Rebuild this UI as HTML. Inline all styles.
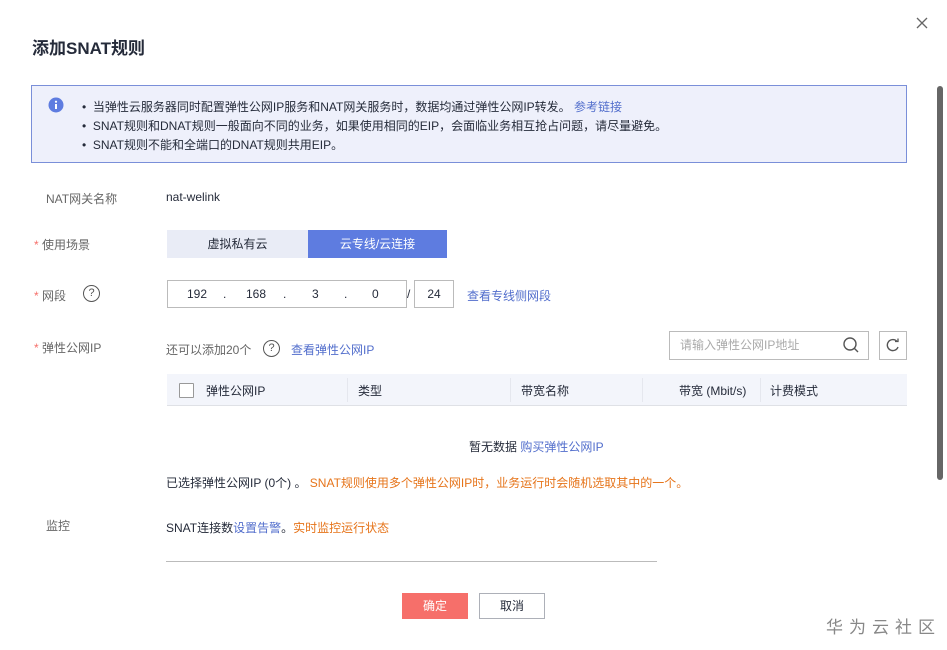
<!DOCTYPE html>
<html><head><meta charset="utf-8"><style>
*{box-sizing:border-box;margin:0;padding:0}
body{width:947px;height:650px;background:#fff;font-family:"Liberation Sans","Noto Sans CJK SC",sans-serif;font-size:12px;color:#252b3a;position:relative;overflow:hidden}
.a{position:absolute;white-space:nowrap}
.blue{color:#526ecc}.org{color:#e6741a}.gray{color:#666}.star{color:#f66f6a}
</style></head><body>
<div class="a" style="left:32px;top:34px;font-size:17px;font-weight:bold;color:#252b3a">添加SNAT规则</div>
<svg class="a" style="left:916px;top:17px" width="12" height="12"><path d="M1 1L11 11M11 1L1 11" stroke="#666" stroke-width="1.3"/></svg>
<div class="a" style="left:937px;top:86px;width:6px;height:394px;background:#666;border-radius:3px"></div>
<div class="a" style="left:31px;top:85px;width:876px;height:78px;background:#eef0fb;border:1px solid #7a8fd9"></div>
<svg class="a" style="left:48px;top:97px" width="16" height="16"><circle cx="8" cy="8" r="7.5" fill="#5e7ce0"/><rect x="7" y="7" width="2" height="5" fill="#fff"/><circle cx="8" cy="4.7" r="1.1" fill="#fff"/></svg>
<div class="a" style="left:82px;top:98px;line-height:19px">• &nbsp;当弹性云服务器同时配置弹性公网IP服务和NAT网关服务时，数据均通过弹性公网IP转发。 <span class="blue">参考链接</span><br>• &nbsp;SNAT规则和DNAT规则一般面向不同的业务，如果使用相同的EIP，会面临业务相互抢占问题，请尽量避免。<br>• &nbsp;SNAT规则不能和全端口的DNAT规则共用EIP。</div>
<div class="a gray" style="left:46px;top:190px">NAT网关名称</div>
<div class="a" style="left:166px;top:190px">nat-welink</div>
<div class="a gray" style="left:34px;top:236px"><span class="star">*</span> 使用场景</div>
<div class="a" style="left:167px;top:230px;width:141px;height:28px;background:#e9ecf6;text-align:center;line-height:28px">虚拟私有云</div>
<div class="a" style="left:308px;top:230px;width:139px;height:28px;background:#5e7ce0;color:#fff;text-align:center;line-height:28px">云专线/云连接</div>
<div class="a gray" style="left:34px;top:287px"><span class="star">*</span> 网段</div>
<div class="a" style="left:83px;top:285px;width:17px;height:17px;border:1.3px solid #555;border-radius:50%;text-align:center;line-height:15px;font-size:11px;color:#555">?</div>
<div class="a" style="left:167px;top:280px;width:240px;height:28px;border:1px solid #bbb"></div>
<div class="a" style="left:187px;top:287px">192</div><div class="a" style="left:223px;top:287px">.</div><div class="a" style="left:246px;top:287px">168</div><div class="a" style="left:283px;top:287px">.</div><div class="a" style="left:312px;top:287px">3</div><div class="a" style="left:344px;top:287px">.</div><div class="a" style="left:372px;top:287px">0</div>
<div class="a" style="left:407px;top:287px">/</div>
<div class="a" style="left:414px;top:280px;width:40px;height:28px;border:1px solid #bbb;text-align:center;line-height:26px">24</div>
<div class="a blue" style="left:467px;top:287px">查看专线侧网段</div>
<div class="a gray" style="left:34px;top:339px"><span class="star">*</span> 弹性公网IP</div>
<div class="a gray" style="left:166px;top:341px">还可以添加20个</div>
<div class="a" style="left:263px;top:340px;width:17px;height:17px;border:1.3px solid #555;border-radius:50%;text-align:center;line-height:15px;font-size:11px;color:#555">?</div>
<div class="a blue" style="left:291px;top:341px">查看弹性公网IP</div>
<div class="a" style="left:669px;top:331px;width:200px;height:29px;border:1px solid #bbb;color:#aaa;padding-left:10px;line-height:27px">请输入弹性公网IP地址</div>
<svg class="a" style="left:842px;top:336px" width="18" height="18"><circle cx="8" cy="8" r="6" fill="none" stroke="#555" stroke-width="1.4"/><path d="M12.5 12.5L16 16" stroke="#555" stroke-width="1.4"/></svg>
<div class="a" style="left:879px;top:331px;width:28px;height:29px;border:1px solid #bbb"></div>
<svg class="a" style="left:885px;top:337px" width="16" height="16"><path d="M12 4.5A5.5 5.5 0 1 0 13 10" fill="none" stroke="#555" stroke-width="1.4"/><path d="M10 4.5H13V1.5" fill="none" stroke="#555" stroke-width="1.3"/></svg>
<div class="a" style="left:167px;top:374px;width:740px;height:32px;background:#f3f5fb;border-bottom:1px solid #dfe1e6"></div>
<div class="a" style="left:179px;top:383px;width:15px;height:15px;border:1px solid #999;background:#fff;border-radius:1px"></div>
<div class="a" style="left:206px;top:382px">弹性公网IP</div>
<div class="a" style="left:347px;top:378px;width:1px;height:24px;background:#e5e7ee"></div>
<div class="a" style="left:358px;top:382px">类型</div>
<div class="a" style="left:510px;top:378px;width:1px;height:24px;background:#e5e7ee"></div>
<div class="a" style="left:521px;top:382px">带宽名称</div>
<div class="a" style="left:642px;top:378px;width:1px;height:24px;background:#e5e7ee"></div>
<div class="a" style="left:679px;top:382px">带宽 (Mbit/s)</div>
<div class="a" style="left:760px;top:378px;width:1px;height:24px;background:#e5e7ee"></div>
<div class="a" style="left:770px;top:382px">计费模式</div>
<div class="a" style="left:469px;top:438px">暂无数据 <span class="blue">购买弹性公网IP</span></div>
<div class="a" style="left:166px;top:474px">已选择弹性公网IP (0个) 。 <span class="org">SNAT规则使用多个弹性公网IP时，业务运行时会随机选取其中的一个。</span></div>
<div class="a gray" style="left:46px;top:517px">监控</div>
<div class="a" style="left:166px;top:519px">SNAT连接数<span class="blue">设置告警</span>。<span class="org">实时监控运行状态</span></div>
<div class="a" style="left:166px;top:561px;width:491px;height:1px;background:#bbb"></div>
<div class="a" style="left:402px;top:593px;width:66px;height:26px;background:#f66f6a;color:#fff;text-align:center;line-height:26px">确定</div>
<div class="a" style="left:479px;top:593px;width:66px;height:26px;border:1px solid #adb0b8;text-align:center;line-height:24px">取消</div>
<div class="a" style="left:826px;top:613px;font-size:17px;color:#888;letter-spacing:6px">华为云社区</div>
</body></html>
